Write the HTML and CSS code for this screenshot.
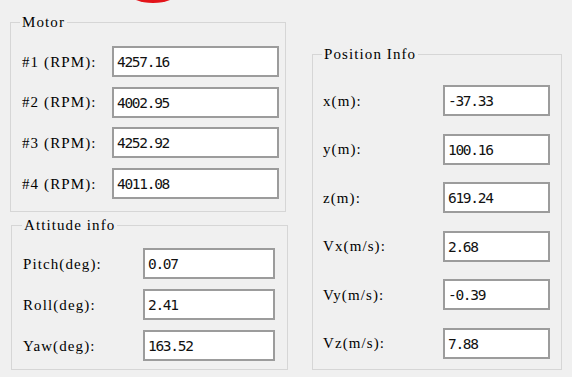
FILE: index.html
```html
<!DOCTYPE html>
<html>
<head>
<meta charset="utf-8">
<link rel="stylesheet" href="styles.css">
</head>
<body>
<div class="blob"></div>
<div class="panel">
  <div class="col-left">
    <section class="group motor">
      <h2 class="group-title">Motor</h2>
      <div class="rows">
        <label class="lbl">#1 (RPM):</label><div class="field">4257.16</div>
        <label class="lbl">#2 (RPM):</label><div class="field">4002.95</div>
        <label class="lbl">#3 (RPM):</label><div class="field">4252.92</div>
        <label class="lbl">#4 (RPM):</label><div class="field">4011.08</div>
      </div>
    </section>
    <section class="group attitude">
      <h2 class="group-title">Attitude info</h2>
      <div class="rows">
        <label class="lbl">Pitch(deg):</label><div class="field">0.07</div>
        <label class="lbl">Roll(deg):</label><div class="field">2.41</div>
        <label class="lbl">Yaw(deg):</label><div class="field">163.52</div>
      </div>
    </section>
  </div>
  <section class="group position">
    <h2 class="group-title">Position Info</h2>
    <div class="rows">
      <label class="lbl">x(m):</label><div class="field">-37.33</div>
      <label class="lbl">y(m):</label><div class="field">100.16</div>
      <label class="lbl">z(m):</label><div class="field">619.24</div>
      <label class="lbl">Vx(m/s):</label><div class="field">2.68</div>
      <label class="lbl">Vy(m/s):</label><div class="field">-0.39</div>
      <label class="lbl">Vz(m/s):</label><div class="field">7.88</div>
    </div>
  </section>
</div>
</body>
</html>
```
FILE: styles.css
```css
html, body {
  margin: 0;
  padding: 0;
  width: 572px;
  height: 377px;
  overflow: hidden;
  background: #f0f0f0;
}
body {
  position: relative;
  font-family: "Liberation Serif", serif;
  color: #111;
}
.blob {
  position: absolute;
  left: 129px;
  top: -17px;
  width: 48px;
  height: 20px;
  border-radius: 50%;
  background: #e3141a;
}
.panel {
  display: flex;
  align-items: flex-start;
}
.col-left {
  display: flex;
  flex-direction: column;
}
.group {
  position: relative;
  border: 1px solid #d6d6d6;
  box-sizing: border-box;
}
.group-title {
  position: absolute;
  top: -9px;
  margin: 0;
  padding: 0 2px;
  background: #f0f0f0;
  font-family: "Liberation Serif", serif;
  font-size: 15px;
  font-weight: normal;
  letter-spacing: 1.1px;
  line-height: 16px;
  color: #000;
}
.rows {
  display: grid;
  align-items: center;
}
.lbl {
  font-family: "Liberation Serif", serif;
  font-size: 15px;
  font-weight: normal;
  letter-spacing: 1.1px;
  line-height: 16px;
  white-space: nowrap;
  color: #000;
}
.field {
  height: 31px;
  box-sizing: border-box;
  border: 2px solid #9c9c9c;
  background: #fff;
  padding: 0 0 0 3px;
  font-family: "DejaVu Sans Mono", monospace;
  font-size: 14.5px;
  letter-spacing: -1.3px;
  line-height: 28px;
  color: #111;
}

/* Motor */
.motor {
  margin: 22px 0 0 10px;
  width: 276px;
  padding: 23px 6px 12px 11px;
}
.motor .group-title { left: 9px; }
.motor .rows {
  grid-template-columns: 90px 167px;
  grid-auto-rows: 31px;
  row-gap: 9.7px;
}

/* Attitude */
.attitude {
  margin: 13px 0 0 11px;
  width: 277px;
  padding: 22px 12px 8px 11px;
}
.attitude .group-title { left: 10px; }
.attitude .rows {
  grid-template-columns: 120px 132px;
  grid-auto-rows: 31px;
  row-gap: 10px;
}

/* Position */
.position {
  margin: 54px 0 0 24px;
  width: 250px;
  padding: 30px 11px 10px 10px;
}
.position .group-title { left: 9px; }
.position .rows {
  grid-template-columns: 120px 107px;
  grid-auto-rows: 31px;
  row-gap: 17.6px;
}
```
